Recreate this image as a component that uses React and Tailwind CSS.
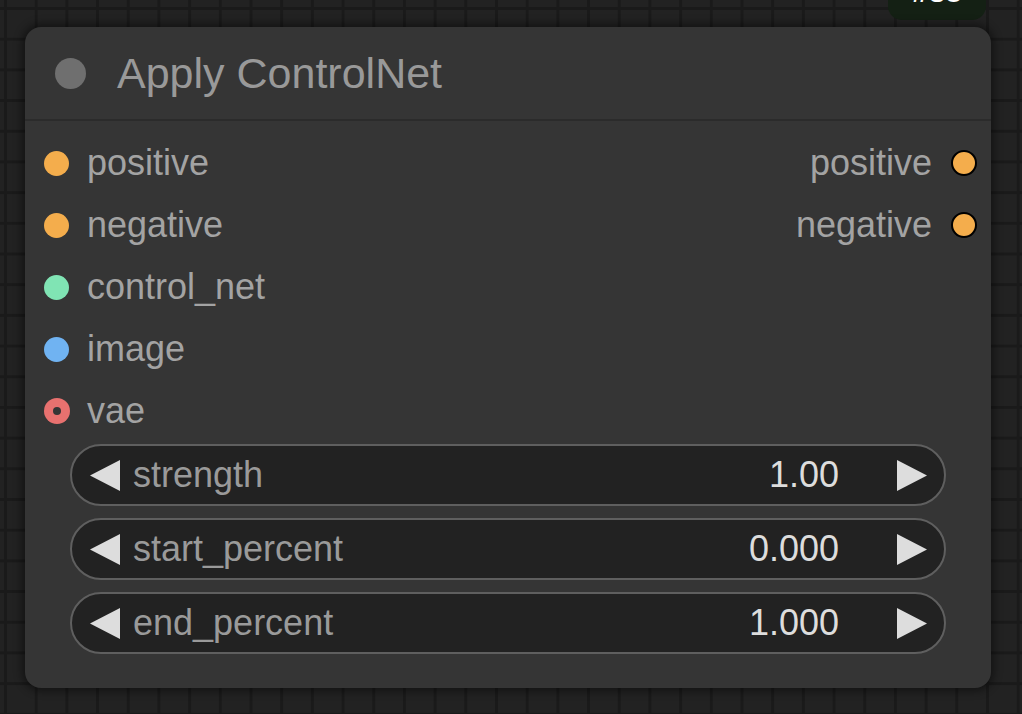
import React from "react";

const font = { fontFamily: '"Liberation Sans", Arial, sans-serif' };

function InputSlot({ color, label, ring }) {
  return (
    <div className="flex h-[62px] items-center">
      <div className="flex w-[62px] justify-center pl-[1px]">
        {ring ? (
          <div className={`flex h-[26px] w-[26px] items-center justify-center rounded-full ${color}`}>
            <div className="h-[8px] w-[8px] rounded-full bg-[#353535]" />
          </div>
        ) : (
          <div className={`h-[25px] w-[25px] rounded-full ${color}`} />
        )}
      </div>
      <span className="text-[36px] text-[#a3a3a3]">{label}</span>
    </div>
  );
}

function OutputSlot({ label }) {
  return (
    <div className="flex h-[62px] items-center justify-end">
      <span className="text-[36px] text-[#a3a3a3]">{label}</span>
      <div className="flex w-[59px] justify-start pl-[19px]">
        <div className="h-[26px] w-[26px] rounded-full border-[2px] border-black bg-[#f4ad4c]" />
      </div>
    </div>
  );
}

function Widget({ label, value }) {
  return (
    <div className="flex h-[62px] items-center rounded-full border-[2px] border-[#5f5f5f] bg-[#222222] pl-[18px] pr-[17px]">
      <svg width="30" height="31" viewBox="0 0 30 31" className="shrink-0">
        <polygon points="30,0 30,31 0,15.5" fill="#dddddd" />
      </svg>
      <span className="ml-[13px] text-[36px] text-[#9a9a9a]">{label}</span>
      <span className="ml-auto mr-[58px] text-[36px] text-[#dddddd]">{value}</span>
      <svg width="30" height="31" viewBox="0 0 30 31" className="shrink-0">
        <polygon points="0,0 0,31 30,15.5" fill="#dddddd" />
      </svg>
    </div>
  );
}

export default function App() {
  return (
    <div
      style={font}
      className="relative h-[714px] w-[1022px] overflow-hidden bg-[#222222] bg-[linear-gradient(to_right,#1a1a1a_3px,transparent_3px),linear-gradient(to_bottom,#1a1a1a_3px,transparent_3px)] bg-size-[30.7px_30.7px] bg-position-[4px_7px] pl-[25px] pt-[27px]"
    >
      <div className="absolute left-[888px] top-[-20px] flex h-[40px] w-[98px] items-end justify-center overflow-hidden rounded-[14px] bg-[#142014] pb-[13px] text-[30px] font-bold leading-none text-white">
        #38
      </div>
      <div className="relative flex h-[661px] w-[966px] flex-col rounded-[16px] bg-[#353535] shadow-[0_0_8px_3px_rgba(0,0,0,0.45)]">
        <div className="flex h-[94px] items-center border-b-[2px] border-[#2b2b2b]">
          <div className="ml-[30px] h-[31px] w-[31px] rounded-full bg-[#6f6f6f]" />
          <span className="ml-[31px] text-[43px] leading-none text-[#999999]">Apply ControlNet</span>
        </div>
        <div className="flex pt-[11px]">
          <div className="flex flex-1 flex-col">
            <InputSlot color="bg-[#f4ad4c]" label="positive" />
            <InputSlot color="bg-[#f4ad4c]" label="negative" />
            <InputSlot color="bg-[#80e4b4]" label="control_net" />
            <InputSlot color="bg-[#70b3f2]" label="image" />
            <InputSlot color="bg-[#e8716f]" label="vae" ring />
          </div>
          <div className="flex flex-col">
            <OutputSlot label="positive" />
            <OutputSlot label="negative" />
          </div>
        </div>
        <div className="mt-[2px] flex flex-col gap-[12px] px-[45px]">
          <Widget label="strength" value="1.00" />
          <Widget label="start_percent" value="0.000" />
          <Widget label="end_percent" value="1.000" />
        </div>
      </div>
    </div>
  );
}
